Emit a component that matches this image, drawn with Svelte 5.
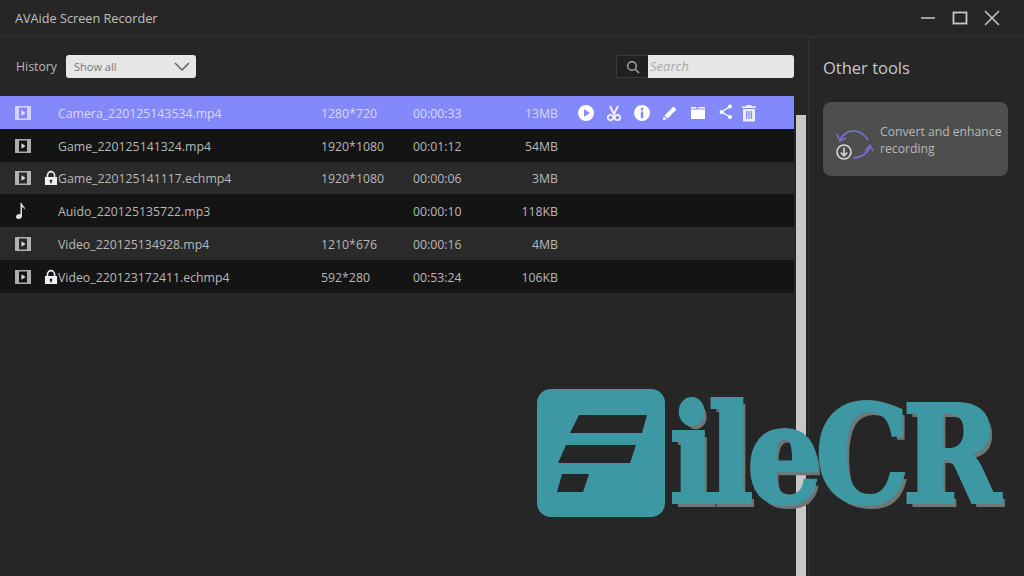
<script>
    const rows = [
        { type: "video", name: "Camera_220125143534.mp4", res: "1280*720", time: "00:00:33", size: "13MB", selected: true },
        { type: "video", name: "Game_220125141324.mp4", res: "1920*1080", time: "00:01:12", size: "54MB" },
        { type: "video", locked: true, name: "Game_220125141117.echmp4", res: "1920*1080", time: "00:00:06", size: "3MB" },
        { type: "audio", name: "Auido_220125135722.mp3", res: "", time: "00:00:10", size: "118KB" },
        { type: "video", name: "Video_220125134928.mp4", res: "1210*676", time: "00:00:16", size: "4MB" },
        { type: "video", locked: true, name: "Video_220123172411.echmp4", res: "592*280", time: "00:53:24", size: "106KB" },
    ];
</script>

<div class="window">
    <header class="titlebar">
        <span class="app-name">AVAide Screen Recorder</span>
        <div class="win-controls">
            <svg width="16" height="16" viewBox="0 0 16 16" fill="none" stroke="#bdbdbd" stroke-width="1.6"><line x1="1" y1="8" x2="15" y2="8" /></svg>
            <svg width="16" height="16" viewBox="0 0 16 16" fill="none" stroke="#c8c8c8" stroke-width="1.8"><rect x="1.5" y="2.5" width="13" height="11" /></svg>
            <svg width="16" height="16" viewBox="0 0 16 16" fill="none" stroke="#c8c8c8" stroke-width="1.5"><path d="M1 1 15 15M15 1 1 15" /></svg>
        </div>
    </header>

    <div class="body">
        <main class="history">
            <div class="toolbar">
                <span class="history-label">History</span>
                <div class="select">
                    <span>Show all</span>
                    <svg width="16" height="9" viewBox="0 0 16 9" fill="none" stroke="#666" stroke-width="1.6"><path d="M1 1l7 7 7-7" /></svg>
                </div>
                <div class="search">
                    <div class="search-icon">
                        <svg width="14" height="14" viewBox="0 0 14 14" fill="none" stroke="#a8a8a8" stroke-width="1.4"><circle cx="6" cy="6" r="4.3" /><line x1="9.2" y1="9.2" x2="13" y2="13" /></svg>
                    </div>
                    <div class="search-input">Search</div>
                </div>
            </div>

            <div class="list-area">
                <div class="list">
                    {#each rows as row}
                        <div class="row" class:selected={row.selected}>
                            <div class="type">
                                {#if row.type === "video"}
                                    <svg width="16" height="14" viewBox="0 0 16 14"><path fill="currentColor" opacity="0.75" d="M0 0h16v14H0z" /><path fill="var(--hole)" d="M4 1.500h8v11H4z" /><path fill="currentColor" d="M6.500 4.200 10.500 7l-4 2.800z" /></svg>
                                {:else}
                                    <svg width="12" height="18" viewBox="0 0 12 18"><path fill="currentColor" d="M5.500 1h1.300c.3 2.500 3.700 3.500 3.200 7-.5-1.500-1.500-2.500-3-3v9c0 1.800-1.500 3-3.300 3C2.200 17 1 16.200 1 14.800c0-1.600 1.700-2.800 3.300-2.800.5 0 .9.100 1.200.2z" /></svg>
                                {/if}
                            </div>
                            <div class="lock">
                                {#if row.locked}
                                    <svg width="15" height="16" viewBox="0 0 15 16"><path fill="none" stroke="#f0f0f0" stroke-width="1.700" d="M3.700 7.500V5a3.800 3.800 0 0 1 7.600 0v2.500" /><path fill="#f0f0f0" fill-rule="evenodd" d="M1 7h13v8.500H1zM7.500 9.500a1.500 1.500 0 0 0-.7 2.800V14h1.400v-1.700a1.500 1.500 0 0 0-.7-2.800z" /></svg>
                                {/if}
                            </div>
                            <div class="cell">{row.name}</div>
                            <div class="cell">{row.res}</div>
                            <div class="cell">{row.time}</div>
                            <div class="cell size">{row.size}</div>
                            {#if row.selected}
                                <div class="actions">
                                    <svg width="18" height="18" viewBox="0 0 18 18"><path fill="#fff" fill-rule="evenodd" d="M9 1a8 8 0 1 1 0 16A8 8 0 0 1 9 1zM7 5.200v7.600L13 9z" /></svg>
                                    <svg width="18" height="18" viewBox="0 0 18 18" fill="none" stroke="#f4f4ff"><path stroke-width="1.800" d="M5 2l4.500 9M13 2 8.500 11" /><circle cx="5.500" cy="13.500" r="2.700" stroke-width="1.700" /><circle cx="12.500" cy="13.500" r="2.700" stroke-width="1.700" /></svg>
                                    <svg width="18" height="18" viewBox="0 0 18 18"><path fill="#fff" fill-rule="evenodd" d="M9 1a8 8 0 1 1 0 16A8 8 0 0 1 9 1zM7.800 3.800v2.400h2.400V3.800zM7.800 7.500v6.700h2.400V7.500z" /></svg>
                                    <svg width="18" height="18" viewBox="0 0 18 18"><path fill="#fff" d="M12.500 2.500l3 3-9 9-3-3zM2.800 12.500l2.700 2.700-3.700 1z" /></svg>
                                    <svg width="18" height="18" viewBox="0 0 18 18"><path fill="#fff" d="M2 3h5l1 1.500h-6zM2 5.500h14V15H2zM9 3h7v1.500H9.500z" /></svg>
                                    <svg class="share" width="18" height="18" viewBox="0 0 18 18"><g fill="#fff"><circle cx="13" cy="3.500" r="2" /><circle cx="4.500" cy="9" r="2" /><circle cx="13" cy="14" r="2" /></g><path fill="none" stroke="#fff" stroke-width="1.300" d="M13 3.500 4.500 9l8.500 5" /></svg>
                                    <svg class="trash" width="18" height="18" viewBox="0 0 18 18"><path fill="#eef" fill-rule="evenodd" d="M6.500 1h5v1.300H16V4H2V2.300h4.500zM3 5h12v12.500H3zM6 7v8h1.300V7zM8.400 7v8h1.300V7zM10.800 7v8h1.300V7z" /></svg>
                                </div>
                            {/if}
                        </div>
                    {/each}
                </div>
                <div class="track"><div class="thumb"></div></div>
            </div>
        </main>

        <aside class="sidebar">
            <h2>Other tools</h2>
            <div class="tool-card">
                <svg class="tool-icon" width="38" height="34" viewBox="0 0 38 34" fill="none">
                    <path stroke="#7a72d8" stroke-width="1.500" d="M4 14C8 7 13 5 17 5c7 0 12 4 15 9M34 20c-2 8-10 12-17 12" />
                    <path stroke="#7a72d8" stroke-width="1.500" d="M1 8l3 7 6-3M29 25l5-6 3 6" />
                    <circle cx="8" cy="26" r="7" fill="#4e4e4e" stroke="#d8d8d8" stroke-width="1.600" />
                    <path stroke="#d8d8d8" stroke-width="1.600" d="M8 21.500v8M4.800 26.500 8 29.800l3.200-3.300" />
                </svg>
                <span>Convert and enhance recording</span>
            </div>
        </aside>
    </div>

    <div class="watermark">
        <svg class="wm-logo" width="128" height="128" viewBox="0 0 128 128"><path fill="#3d98a3" fill-rule="evenodd" d="M14 0h100a14 14 0 0 1 14 14v100a14 14 0 0 1-14 14H14a14 14 0 0 1-14-14V14A14 14 0 0 1 14 0zM42 26 33 44h72l5-18zM29 56 21 74h72l6-18zM25 85 20 103h26l6-18z" /></svg>
        <span class="wm-text">ileCR</span>
    </div>
</div>

<style>
    :global(body) {
        margin: 0;
        background: #262626;
    }

    .window {
        position: relative;
        width: 1024px;
        height: 576px;
        overflow: hidden;
        display: flex;
        flex-direction: column;
        background: #262626;
        color: #c4c4c4;
        font-family: "Open Sans", "Noto Sans", sans-serif;
    }

    .titlebar {
        height: 36px;
        flex: none;
        display: flex;
        align-items: center;
        justify-content: space-between;
        padding: 0 24px 0 15px;
        border-bottom: 1px solid #333;
    }

    .app-name {
        font-size: 12.7px;
        color: #c0c0c0;
    }

    .win-controls {
        display: flex;
        gap: 16px;
    }

    .body {
        flex: 1;
        display: flex;
        min-height: 0;
    }

    .history {
        width: 808px;
        flex: none;
        border-right: 1px solid #333;
        display: flex;
        flex-direction: column;
    }

    .toolbar {
        height: 59px;
        flex: none;
        display: flex;
        align-items: center;
        padding: 0 14px 0 16px;
        font-size: 12.3px;
    }

    .history-label {
        color: #b8b8b8;
        margin-right: 9px;
    }

    .select {
        width: 130px;
        height: 23px;
        box-sizing: border-box;
        display: flex;
        align-items: center;
        justify-content: space-between;
        padding: 0 6px 0 8px;
        background: #e6e6e6;
        border-radius: 3px;
        color: #777;
        font-size: 11px;
    }

    .search {
        margin-left: auto;
        display: flex;
        height: 23px;
        width: 178px;
    }

    .search-icon {
        width: 32px;
        box-sizing: border-box;
        display: flex;
        align-items: center;
        justify-content: center;
        background: #202020;
        border: 1px solid #3a3a3a;
        border-right: none;
        border-radius: 3px 0 0 3px;
    }

    .search-input {
        flex: 1;
        background: #e6e6e6;
        border-radius: 0 3px 3px 0;
        color: #aaa;
        font-style: italic;
        font-size: 13px;
        line-height: 23px;
        padding-left: 2px;
    }

    .list-area {
        flex: 1;
        display: flex;
        min-height: 0;
    }

    .list {
        width: 794px;
        flex: none;
        font-size: 12.3px;
    }

    .row {
        --hole: #141414;
        height: 32.8px;
        box-sizing: border-box;
        display: grid;
        grid-template-columns: 29px 14px 263px 92px 87px 58px auto;
        align-items: center;
        padding-left: 15px;
        background: #141414;
        color: #b8b8b8;
    }

    .cell {
        padding-top: 2px;
    }

    .row:nth-child(odd) {
        --hole: #2a2a2a;
        background: #2a2a2a;
    }

    .row.selected {
        --hole: #8389fb;
        background: #8389fb;
        color: #d8daf8;
    }

    .type {
        display: flex;
        padding-top: 1px;
        color: #e0e0e0;
    }

    .row.selected .type {
        color: #eceeff;
    }

    .lock {
        display: flex;
        padding-top: 1px;
    }

    .size {
        text-align: right;
    }

    .actions {
        display: flex;
        gap: 10px;
        padding: 1px 0 0 19px;
    }

    .share {
        margin-top: -1px;
    }

    .trash {
        margin-left: -5px;
    }

    .track {
        width: 10px;
        margin-left: 2px;
        padding-top: 19px;
        display: flex;
    }

    .thumb {
        flex: 1;
        background: #c8c8c8;
    }

    .sidebar {
        flex: 1;
        padding: 19px 16px 0 14px;
    }

    h2 {
        margin: 0;
        font-size: 16.5px;
        font-weight: 400;
        line-height: 24px;
        color: #c8c8c8;
    }

    .tool-card {
        margin-top: 22px;
        height: 74px;
        box-sizing: border-box;
        display: flex;
        align-items: flex-start;
        padding: 21px 4px 0 13px;
        background: #4e4e4e;
        border-radius: 8px;
        font-size: 12.2px;
        line-height: 17px;
        color: #b8b8b8;
    }

    .tool-icon {
        flex: none;
        margin: 3px 6px 0 0;
    }

    .watermark {
        position: absolute;
        left: 537px;
        top: 389px;
        display: flex;
        align-items: center;
        pointer-events: none;
    }

    .wm-text {
        margin-left: 5px;
        font-family: "DejaVu Serif", serif;
        font-weight: 700;
        font-stretch: condensed;
        font-size: 134px;
        line-height: 128px;
        color: #3d98a3;
        -webkit-text-stroke: 4px #3d98a3;
        text-shadow: 4px 5px 0 #6f7676;
        letter-spacing: -6px;
        transform: translateY(2px) scaleX(0.97);
        transform-origin: left center;
    }
</style>
